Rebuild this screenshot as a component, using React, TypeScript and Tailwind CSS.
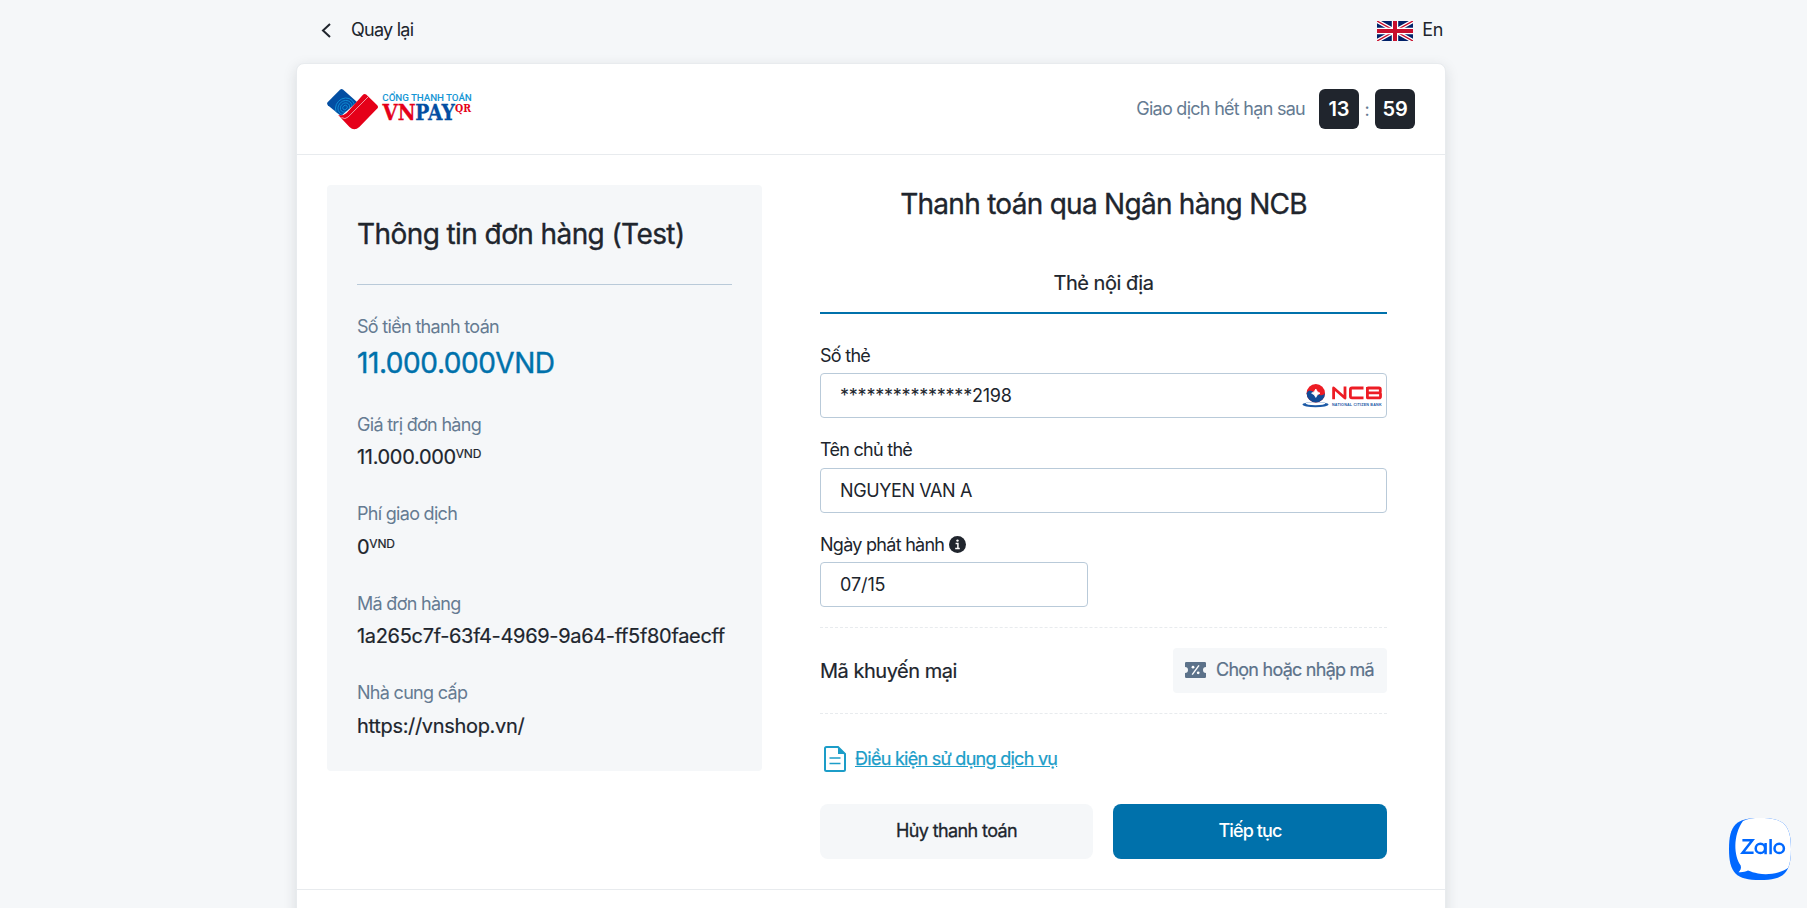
import type { ReactNode } from "react";

function VnpayLogo() {
  return (
    <svg width="146" height="42" viewBox="0 0 146 42" className="block">
      <defs>
        <clipPath id="blueTile">
          <path d="M13 1.800 q1.600-1.400 3.200 0 L30 14 14 28 .8 17.200 q-1.400-1.600 0-3.200z" />
        </clipPath>
      </defs>
      <path d="M13 1.800 q1.600-1.400 3.200 0 L30 14 14 28 .8 17.200 q-1.400-1.600 0-3.200z" fill="#034ea2" />
      <g clipPath="url(#blueTile)" fill="none" stroke="#1290d6" strokeWidth=".9">
        <ellipse cx="18" cy="19.500" rx="2" ry="2.500" transform="rotate(45 18 19.500)" />
        <ellipse cx="18" cy="19.500" rx="4.300" ry="5" transform="rotate(45 18 19.500)" />
        <ellipse cx="18" cy="19.500" rx="6.600" ry="7.500" transform="rotate(45 18 19.500)" />
        <ellipse cx="18" cy="19.500" rx="9" ry="10" transform="rotate(45 18 19.500)" />
      </g>
      <path d="M36.200 6.500 q1.500-1.200 3 0 L50 17 q2 1.900 0 3.800 L32.300 39 q-5 4.400-9.800 0 L11.200 27 q4.600 1.400 8.400-2z" fill="#e50019" />
      <path d="M14.500 29.500 q3.400 2.500 6.600-.5 L41 9" fill="none" stroke="#f9c3c8" strokeWidth=".8" />
      <text x="55.300" y="13" fontFamily="Roboto, sans-serif" fontSize="9.800" fontWeight="500" fill="#1596d4" textLength="89.500">CỔNG THANH TOÁN</text>
      <text x="55.500" y="31.800" fontFamily="'DejaVu Serif', serif" fontSize="21.500" fontWeight="700" fill="#e50019" stroke="#e50019" strokeWidth=".3" textLength="33" lengthAdjust="spacingAndGlyphs">VN</text>
      <text x="88.300" y="31.800" fontFamily="'DejaVu Serif', serif" fontSize="21.500" fontWeight="700" fill="#034ea2" stroke="#034ea2" strokeWidth=".3" textLength="39.500" lengthAdjust="spacingAndGlyphs">PAY</text>
      <text x="128" y="24.400" fontFamily="'DejaVu Serif', serif" fontSize="10.500" fontWeight="700" fill="#e50019" textLength="16" lengthAdjust="spacingAndGlyphs">QR</text>
    </svg>
  );
}

function FlagIcon() {
  return (
    <svg width="36" height="20" viewBox="0 0 36 20" className="block">
      <rect width="36" height="20" fill="#012169" />
      <path d="M0 0l36 20M36 0L0 20" stroke="#fff" strokeWidth="4" />
      <path d="M0 0l36 20M36 0L0 20" stroke="#c8102e" strokeWidth="1.4" />
      <path d="M18 0v20M0 10h36" stroke="#fff" strokeWidth="6.4" />
      <path d="M18 0v20M0 10h36" stroke="#c8102e" strokeWidth="4" />
    </svg>
  );
}

function NcbLogo() {
  return (
    <svg width="80" height="25" viewBox="0 0 80 25" className="block">
      <ellipse cx="13.500" cy="21.600" rx="13" ry="2.600" fill="#1c5aa6" />
      <ellipse cx="13.500" cy="20.600" rx="10" ry="1.600" fill="#fff" />
      <circle cx="13.800" cy="10.200" r="9.200" fill="#ed1c24" />
      <path d="M4.600 10.200 q1.500-3.600 5-2.200 t8 4 q3.600 1.200 5.400-1.800 a9.200 9.200 0 0 1-18.400 0z" fill="#114b96" />
      <path d="M13.800 6 q1 3.200 4.200 4.200-3.200 1-4.200 4.200-1-3.200-4.200-4.200 3.200-1 4.200-4.200z" fill="#fff" stroke="#fff" strokeWidth=".8" />
      <g fill="none" stroke="#ed1c24" strokeWidth="2.800" strokeLinejoin="round">
        <path d="M31.600 16.200V5L43 15V3.600" />
        <path d="M61.500 5H50q-1.600 0-1.600 1.600v6.600q0 1.600 1.600 1.600H61.500" />
        <path d="M65.400 5H77q1.300 0 1.300 1.300v2.300q0 1.200-1.300 1.200H65.400M77 9.800q1.500 0 1.500 1.300v2.300q0 1.400-1.500 1.400H65.400V4" />
      </g>
      <text x="30" y="22.600" fontFamily="'Liberation Sans', sans-serif" fontSize="3.700" fontWeight="700" fill="#1c5aa6" textLength="49.600" lengthAdjust="spacing">NATIONAL CITIZEN BANK</text>
    </svg>
  );
}

function TicketIcon() {
  return (
    <svg width="21" height="16" viewBox="0 0 21 16" className="block">
      <path d="M1.2 0h18.6q1.2 0 1.2 1.2V5a3 3 0 0 0 0 6v3.8q0 1.2-1.2 1.2H1.2Q0 16 0 14.8V11a3 3 0 0 0 0-6V1.2Q0 0 1.2 0z" fill="#5c728a" />
      <path d="M14 3.400L7.200 12.600" stroke="#fff" strokeWidth="1.400" />
      <circle cx="8" cy="5.200" r="1.400" fill="#fff" />
      <circle cx="13.200" cy="10.800" r="1.400" fill="#fff" />
    </svg>
  );
}

function DocumentIcon() {
  return (
    <svg width="22" height="26" viewBox="0 0 22 26" className="block">
      <path d="M2.500 1H14l7 7v15.500q0 1.500-1.500 1.500h-17Q1 25 1 23.500v-21Q1 1 2.500 1z" fill="none" stroke="#1c9dc8" strokeWidth="2" />
      <path d="M14 1l7 7h-7z" fill="#1c9dc8" />
      <path d="M5.500 12h11M5.500 17.500h11" stroke="#1c9dc8" strokeWidth="1.600" />
    </svg>
  );
}

function InfoIcon() {
  return (
    <svg width="17" height="17" viewBox="0 0 17 17" className="block">
      <circle cx="8.500" cy="8.500" r="8.500" fill="#20252d" />
      <circle cx="8.500" cy="4.600" r="1.200" fill="#fff" />
      <path d="M6.600 7.600h2.300v4.600M6.200 12.400h4.600" fill="none" stroke="#fff" strokeWidth="1.500" />
    </svg>
  );
}

function ZaloBadge() {
  return (
    <div className="fixed right-4 bottom-7 h-[62px] w-[62px]">
      <svg width="62" height="62" viewBox="0 0 62 62" className="block">
        <path d="M31 0C55 0 62 7 62 31S55 62 31 62 0 55 0 31 7 0 31 0z" fill="#0068ff" />
        <path d="M14 3C19 .5 24 0 31 0c24 0 31 7 31 31 0 8-.8 14-2.8 18.800C52 55 40 57.500 29 55.500c-4-.7-7-1.700-10-2.900-3 1.300-6 2-9.500 1.600 2-1.600 3-4.200 2.200-6.700C5 38 3.500 18 14 3z" fill="#fff" />
        <g fill="none" stroke="#0068ff" strokeWidth="2.500">
          <path d="M13.400 22.300h10L13.600 34.800h11" />
          <circle cx="31.400" cy="30.400" r="4.700" />
          <path d="M36.600 25v11.200M41.600 21v15.200" />
          <circle cx="50.200" cy="30.400" r="4.700" />
        </g>
      </svg>
    </div>
  );
}

function OrderRow({ label, children }: { label: string; children: ReactNode }) {
  return (
    <div className="h-[89.500px]">
      <div className="text-[18px] leading-[27px] tracking-[-0.7px] text-[#657b92]">{label}</div>
      <div className="mt-[3.250px] text-[20px] leading-[32px] tracking-[-0.32px] [-webkit-text-stroke:0.2px]">{children}</div>
    </div>
  );
}

function Field({ label, value, width, extra, icon }: { label: string; value: ReactNode; width: string; extra?: ReactNode; icon?: ReactNode }) {
  return (
    <div className="h-[94.500px]">
      <div className="flex h-[22px] items-center gap-[5px] text-[18px] leading-[22px] tracking-[-0.72px]">
        {label}
        {icon}
      </div>
      <div className={`mt-[6.250px] flex h-[45px] items-center justify-between rounded-[4px] border border-[#b9cad9] bg-white pl-[19px] pr-1 text-[18px] ${width}`}>
        {value}
        {extra}
      </div>
    </div>
  );
}

export default function App() {
  return (
    <div className="h-[908px] overflow-hidden bg-[#f5f7f9] font-['Inter',sans-serif] text-[#20252d]">
      <div className="ml-[296px] w-[1150px]">
        <header className="flex h-[63px] items-center justify-between pr-[3px] pl-[25px] text-[18px] tracking-[-0.75px]">
          <div className="flex items-center gap-[20px] pb-[5px]">
            <svg width="10" height="15" viewBox="0 0 10 15" className="mt-[3px] block">
              <path d="M9 1L2 7.500l7 6.500" fill="none" stroke="#20252d" strokeWidth="2" />
            </svg>
            <span>Quay lại</span>
          </div>
          <div className="flex items-center gap-[9px] pb-[5px]">
            <span className="mt-[3px]"><FlagIcon /></span>
            <span className="tracking-[-0.3px]">En</span>
          </div>
        </header>

        <main className="h-[900px] rounded-t-[8px] border border-[#e8ebee] bg-white shadow-[0_4px_14px_rgba(32,37,45,0.13)]">
          <div className="flex h-[91px] items-center justify-between border-b border-[#e8ebee] px-[30px]">
            <VnpayLogo />
            <div className="flex items-center text-[18px] text-[#657b92]">
              <span className="mr-[14px] pb-[2px] tracking-[-0.72px]">Giao dịch hết hạn sau</span>
              <span className="flex h-10 w-10 items-center justify-center rounded-[6px] bg-[#20252d] text-[20px] font-semibold tracking-[-0.2px] text-white">13</span>
              <span className="w-4 text-center">:</span>
              <span className="flex h-10 w-10 items-center justify-center rounded-[6px] bg-[#20252d] text-[20px] font-semibold tracking-[-0.2px] text-white">59</span>
            </div>
          </div>

          <div className="flex h-[735px] items-start border-b border-[#e8ebee] pt-[30px] pl-[30px]">
            <section className="h-[586px] w-[435px] rounded-[4px] bg-[#f5f7f9] px-[30px] pt-[29px]">
              <h2 className="h-[71px] border-b border-[#b9cad9] text-[28px] leading-[40px] font-normal tracking-[-0.58px] [-webkit-text-stroke:0.35px]">Thông tin đơn hàng (Test)</h2>
              <div className="mt-[28px] h-[97.750px]">
                <div className="text-[18px] leading-[27px] tracking-[-0.68px] text-[#657b92]">Số tiền thanh toán</div>
                <div className="mt-[2px] text-[28px] leading-[42px] font-normal tracking-[-0.42px] text-[#0071ab] [-webkit-text-stroke:0.4px]">11.000.000VND</div>
              </div>
              <OrderRow label="Giá trị đơn hàng">
                11.000.000<span className="relative -top-[6px] text-[12px] tracking-[-0.2px]">VND</span>
              </OrderRow>
              <OrderRow label="Phí giao dịch">
                0<span className="relative -top-[6px] text-[12px] tracking-[-0.2px]">VND</span>
              </OrderRow>
              <OrderRow label="Mã đơn hàng">1a265c7f-63f4-4969-9a64-ff5f80faecff</OrderRow>
              <OrderRow label="Nhà cung cấp">https://vnshop.vn/</OrderRow>
            </section>

            <section className="ml-[58px] w-[567px]">
              <h2 className="text-center text-[28px] leading-[39px] font-normal tracking-[-0.72px] [-webkit-text-stroke:0.35px]">Thanh toán qua Ngân hàng NCB</h2>
              <div className="mt-[29px] flex h-[61px] items-center justify-center border-b-2 border-[#0071ab] text-[20px] tracking-[-0.5px] [-webkit-text-stroke:0.2px]">Thẻ nội địa</div>
              <div className="pt-[30.750px]">
                <Field label="Số thẻ" value={<span className="tracking-[-0.22px]">***************2198</span>} width="w-full" extra={<NcbLogo />} />
                <Field label="Tên chủ thẻ" value={<span className="tracking-[-0.4px]">NGUYEN VAN A</span>} width="w-full" />
                <Field label="Ngày phát hành" value={<span className="tracking-[-0.1px]">07/15</span>} width="w-[268px]" icon={<InfoIcon />} />
              </div>
              <div className="-mt-[1.750px] flex h-[87px] items-center justify-between border-y border-dashed border-[#e8ebee]">
                <span className="pt-[1px] text-[20px] tracking-[-0.48px] [-webkit-text-stroke:0.2px]">Mã khuyến mại</span>
                <button className="flex h-[45px] w-[214px] items-center gap-[10px] rounded-[4px] bg-[#f5f7f9] pl-3 text-[18px] tracking-[-0.75px] whitespace-nowrap text-[#5c728a] [-webkit-text-stroke:0.2px]">
                  <TicketIcon />
                  <span className="pb-[2px]">Chọn hoặc nhập mã</span>
                </button>
              </div>
              <a className="mt-[32px] ml-1 flex h-[26px] items-center gap-[9px] text-[18px] tracking-[-0.72px] text-[#1c9dc8] [-webkit-text-stroke:0.25px]">
                <DocumentIcon />
                <span className="underline">Điều kiện sử dụng dịch vụ</span>
              </a>
              <div className="mt-[32px] grid grid-cols-[273px_274px] gap-5">
                <button className="h-[55px] rounded-[8px] bg-[#f5f7f9] pb-[2px] text-[18px] tracking-[-0.6px] [-webkit-text-stroke:0.3px]">Hủy thanh toán</button>
                <button className="h-[55px] rounded-[8px] bg-[#0071ab] pb-[2px] text-[18px] font-medium tracking-[-0.88px] text-white">Tiếp tục</button>
              </div>
            </section>
          </div>
        </main>
      </div>
      <ZaloBadge />
    </div>
  );
}
